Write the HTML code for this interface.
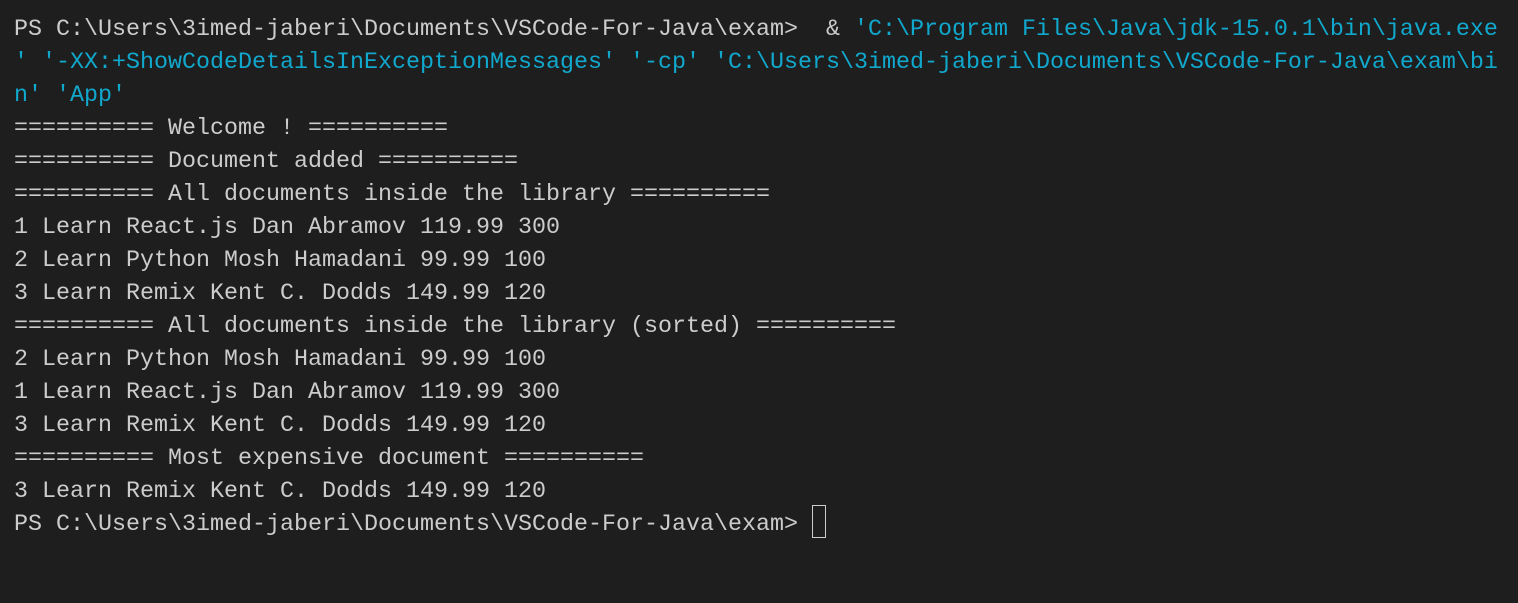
<!DOCTYPE html>
<html><head><meta charset="utf-8"><style>
html,body{margin:0;padding:0;background:#1e1e1e;width:1518px;height:603px;overflow:hidden}
pre{margin:0;position:absolute;left:14px;top:14px;font-family:"Liberation Mono",monospace;font-size:23.33px;line-height:33px;color:#cccccc;white-space:pre}
.c{color:#11a8cd}
.cur{position:absolute;left:812px;top:505px;width:14px;height:33px;border:1px solid #cccccc;box-sizing:border-box}
</style></head><body>
<pre>PS C:\Users\3imed-jaberi\Documents\VSCode-For-Java\exam>  &amp; <span class="c">'C:\Program Files\Java\jdk-15.0.1\bin\java.exe</span>
<span class="c">' '-XX:+ShowCodeDetailsInExceptionMessages' '-cp' 'C:\Users\3imed-jaberi\Documents\VSCode-For-Java\exam\bi</span>
<span class="c">n' 'App'</span>
========== Welcome ! ==========
========== Document added ==========
========== All documents inside the library ==========
1 Learn React.js Dan Abramov 119.99 300
2 Learn Python Mosh Hamadani 99.99 100
3 Learn Remix Kent C. Dodds 149.99 120
========== All documents inside the library (sorted) ==========
2 Learn Python Mosh Hamadani 99.99 100
1 Learn React.js Dan Abramov 119.99 300
3 Learn Remix Kent C. Dodds 149.99 120
========== Most expensive document ==========
3 Learn Remix Kent C. Dodds 149.99 120
PS C:\Users\3imed-jaberi\Documents\VSCode-For-Java\exam> </pre>
<div class="cur"></div>
</body></html>
